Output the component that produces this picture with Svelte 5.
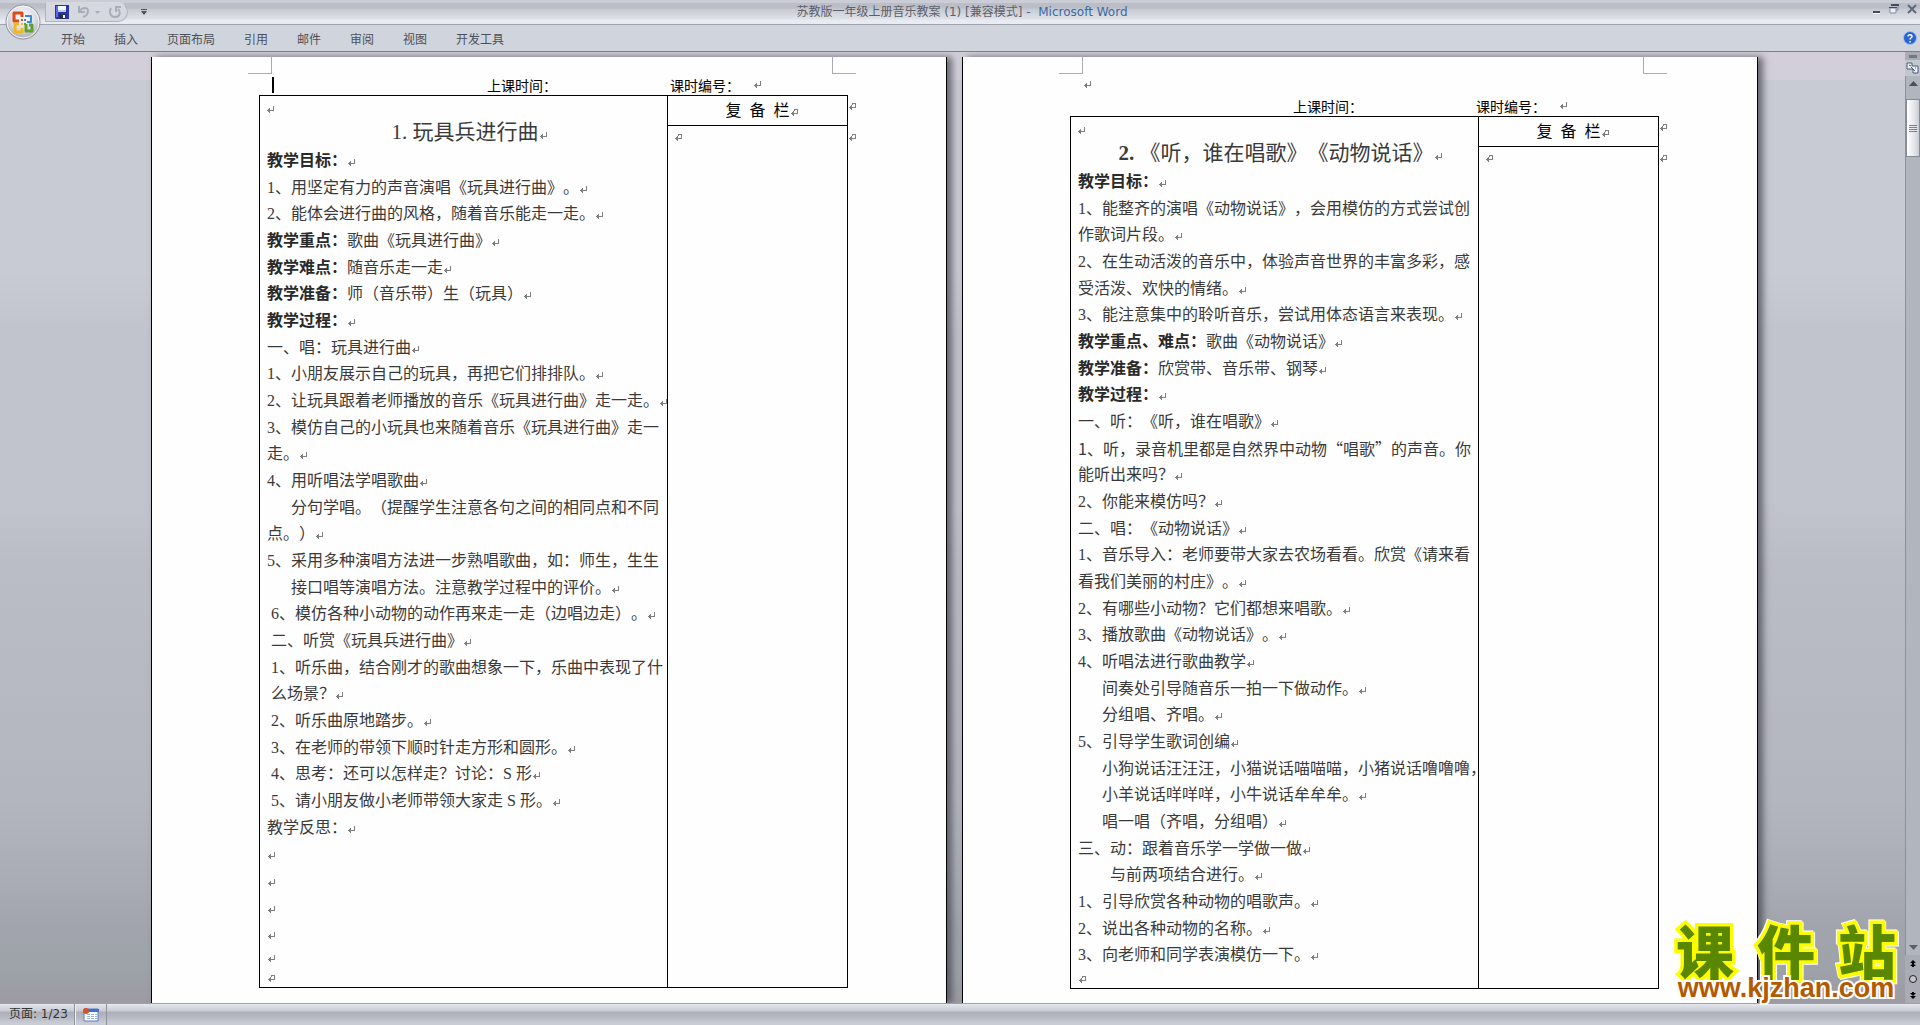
<svelte:options runes={true} />

<script lang="ts">
	type Line = { b?: string; t?: string; indent?: number; wide?: boolean; short?: boolean; open?: boolean; end?: boolean };
	type Page = { title: string; number: string; lines: Line[] };

	const tabs = ['开始', '插入', '页面布局', '引用', '邮件', '审阅', '视图', '开发工具'];

	// open: the line wraps into the next one, so it carries no paragraph mark
	const pages: Page[] = [
		{
			number: '1.',
			title: '玩具兵进行曲',
			lines: [
				{ b: '教学目标：' },
				{ t: '1、用坚定有力的声音演唱《玩具进行曲》。' },
				{ t: '2、能体会进行曲的风格，随着音乐能走一走。' },
				{ b: '教学重点：', t: '歌曲《玩具进行曲》' },
				{ b: '教学难点：', t: '随音乐走一走' },
				{ b: '教学准备：', t: '师（音乐带）生（玩具）' },
				{ b: '教学过程：' },
				{ t: '一、唱：玩具进行曲' },
				{ t: '1、小朋友展示自己的玩具，再把它们排排队。' },
				{ t: '2、让玩具跟着老师播放的音乐《玩具进行曲》走一走。' },
				{ t: '3、模仿自己的小玩具也来随着音乐《玩具进行曲》走一', open: true },
				{ t: '走。' },
				{ t: '4、用听唱法学唱歌曲' },
				{ t: '分句学唱。（提醒学生注意各句之间的相同点和不同', indent: 24, open: true },
				{ t: '点。）' },
				{ t: '5、采用多种演唱方法进一步熟唱歌曲，如：师生，生生', open: true },
				{ t: '接口唱等演唱方法。注意教学过程中的评价。', indent: 24 },
				{ t: '6、模仿各种小动物的动作再来走一走（边唱边走）。', indent: 4 },
				{ t: '二、听赏《玩具兵进行曲》', indent: 4 },
				{ t: '1、听乐曲，结合刚才的歌曲想象一下，乐曲中表现了什', indent: 4, open: true },
				{ t: '么场景？', indent: 4 },
				{ t: '2、听乐曲原地踏步。', indent: 4 },
				{ t: '3、在老师的带领下顺时针走方形和圆形。', indent: 4 },
				{ t: '4、思考：还可以怎样走？讨论：S 形', indent: 4 },
				{ t: '5、请小朋友做小老师带领大家走 S 形。', indent: 4 },
				{ t: '教学反思：' },
				{},
				{},
				{},
				{},
				{ short: true },
				{ short: true, end: true }
			]
		},
		{
			number: '2.',
			title: '《听，谁在唱歌》《动物说话》',
			lines: [
				{ b: '教学目标：' },
				{ t: '1、能整齐的演唱《动物说话》，会用模仿的方式尝试创', open: true },
				{ t: '作歌词片段。' },
				{ t: '2、在生动活泼的音乐中，体验声音世界的丰富多彩，感', open: true },
				{ t: '受活泼、欢快的情绪。' },
				{ t: '3、能注意集中的聆听音乐，尝试用体态语言来表现。' },
				{ b: '教学重点、难点：', t: '歌曲《动物说话》' },
				{ b: '教学准备：', t: '欣赏带、音乐带、钢琴' },
				{ b: '教学过程：' },
				{ t: '一、听：《听，谁在唱歌》' },
				{ t: '1、听，录音机里都是自然界中动物“唱歌”的声音。你', wide: true, open: true },
				{ t: '能听出来吗？' },
				{ t: '2、你能来模仿吗？' },
				{ t: '二、唱：《动物说话》' },
				{ t: '1、音乐导入：老师要带大家去农场看看。欣赏《请来看', open: true },
				{ t: '看我们美丽的村庄》。' },
				{ t: '2、有哪些小动物？它们都想来唱歌。' },
				{ t: '3、播放歌曲《动物说话》。' },
				{ t: '4、听唱法进行歌曲教学' },
				{ t: '间奏处引导随音乐一拍一下做动作。', indent: 24 },
				{ t: '分组唱、齐唱。', indent: 24 },
				{ t: '5、引导学生歌词创编' },
				{ t: '小狗说话汪汪汪，小猫说话喵喵喵，小猪说话噜噜噜，', indent: 24, open: true },
				{ t: '小羊说话咩咩咩，小牛说话牟牟牟。', indent: 24 },
				{ t: '唱一唱（齐唱，分组唱）', indent: 24 },
				{ t: '三、动：跟着音乐学一学做一做' },
				{ t: '与前两项结合进行。', indent: 32 },
				{ t: '1、引导欣赏各种动物的唱歌声。' },
				{ t: '2、说出各种动物的名称。' },
				{ t: '3、向老师和同学表演模仿一下。' },
				{ short: true, end: true }
			]
		}
	];
</script>

{#snippet mark()}
	<svg class="mark" viewBox="0 0 7 7" aria-hidden="true">
		<path d="M6 0h1v5H6zM0 4h6v1H0zM1 3h1v3H1zM2 2h1v5H2z" />
	</svg>
{/snippet}

{#snippet cellMark()}
	<svg class="mark" viewBox="0 0 7 7" aria-hidden="true">
		<path d="M3 0h4v1H3zM3 1h1v1H3zM6 1h1v4H6zM0 4h6v1H0zM1 3h1v3H1zM2 2h1v5H2z" />
	</svg>
{/snippet}

<div class="word" lang="zh-CN">
	<header class="titlebar">
		<div class="quick">
			<button aria-label="保存">
				<svg width="14" height="14" viewBox="0 0 14 14">
					<path d="M0 0h14v14H1L0 13z" fill="#2b35a8" />
					<path d="M1 1h2v11H1z" fill="#5b6be0" />
					<path d="M3 1h8v6H3z" fill="#f4f7ff" />
					<path d="M3 5h8v2H3z" fill="#b8cdf2" />
					<path d="M4 9h7v5H4z" fill="#27304f" />
					<path d="M8 10h2v3H8z" fill="#fff" />
				</svg>
			</button>
			<button aria-label="撤消">
				<svg width="22" height="14" viewBox="0 0 22 14" fill="none">
					<path d="M1 1v6h6M2 6c2-4 8-4 8 0 0 3-2 5-5 6" stroke="#a9adba" stroke-width="2" />
					<path d="M17 6h5l-2.5 3z" fill="#a9adba" />
				</svg>
			</button>
			<button aria-label="恢复">
				<svg width="12" height="14" viewBox="0 0 12 14" fill="none">
					<path d="M2 3C0 7 1 12 6 12s6-5 3-8" stroke="#a9adba" stroke-width="2" />
					<path d="M6 1h6v2H8v4H6z" fill="#a9adba" />
				</svg>
			</button>
		</div>
		<button class="more" aria-label="自定义快速访问工具栏">
			<svg width="6" height="6" viewBox="0 0 6 6"><path d="M0 0h6v1H0zM0 2h6L3 6z" fill="#4a4d55" /></svg>
		</button>
		<h1>苏教版一年级上册音乐教案 (1) [兼容模式] <span>- &nbsp;Microsoft Word</span></h1>
		<div class="window-buttons">
			<button aria-label="最小化">
				<svg width="9" height="10" viewBox="0 0 9 10"><path d="M1 7h7v2H1z" fill="#454a5c" /><path d="M1 9h7v1H1z" fill="#fff" /></svg>
			</button>
			<button aria-label="还原">
				<svg width="10" height="10" viewBox="0 0 10 10" fill="none">
					<path d="M2 1h7v5H7" stroke="#7f8ba6" />
					<path d="M2 0h8v2H2z" fill="#454a5c" />
					<path d="M1 4h6v5H1z" fill="#eef0f5" stroke="#7f8ba6" />
					<path d="M0 3h8v1H0z" fill="#454a5c" />
				</svg>
			</button>
			<button aria-label="关闭">
				<svg width="10" height="10" viewBox="0 0 10 10"><path d="M1 1l8 8M9 1L1 9" stroke="#5d6880" stroke-width="2" /></svg>
			</button>
		</div>
	</header>

	<button class="office" aria-label="Office 按钮">
		<svg width="36" height="36" viewBox="0 0 36 36">
			<defs>
				<radialGradient id="orb" cx="50%" cy="35%" r="65%">
					<stop offset="0" stop-color="#fff" />
					<stop offset="0.6" stop-color="#d9dbe1" />
					<stop offset="1" stop-color="#a6a9b1" />
				</radialGradient>
			</defs>
			<circle cx="18" cy="18" r="17" fill="url(#orb)" stroke="#8f929a" />
			<circle cx="18" cy="18" r="16" fill="none" stroke="#f7f8fa" />
			<g fill="none" stroke-width="3" stroke-linejoin="round">
				<path d="M14 17H9V9h8v4" stroke="#dc4a16" />
				<path d="M20 12h6v6h-4" stroke="#3a8bd6" stroke-width="2" />
				<path d="M14 20h-4v8h7v-4" stroke="#f5b81c" />
				<path d="M21 20v7h6v-6h-3" stroke="#5fa02e" />
			</g>
			<path d="M16 15h2v2h-2z" fill="#dc4a16" />
			<path d="M19 15h2v2h-2z" fill="#3a8bd6" />
			<path d="M16 19h2v2h-2z" fill="#f5b81c" />
			<path d="M19 19h2v2h-2z" fill="#5fa02e" />
		</svg>
	</button>

	<nav class="tabs">
		{#each tabs as tab}
			<button>{tab}</button>
		{/each}
		<button class="help" aria-label="帮助">
			<svg width="14" height="14" viewBox="0 0 14 14">
				<circle cx="7" cy="7" r="6.5" fill="#2a62d0" stroke="#9fc0ee" />
				<path d="M5 5.5c0-2.5 4-2.5 4 0 0 1.5-2 1.5-2 3M7 10v1.5" fill="none" stroke="#fff" stroke-width="1.5" />
			</svg>
		</button>
	</nav>

	<div class="workspace">
		<main>
			{#each pages as page, i}
				<article class="paper">
					<span class="corner left"></span>
					<span class="corner right"></span>
					{#if i > 0}
						<p class="headline">{@render mark()}</p>
					{/if}
					<p class="headline">
						<span class="lead" class:caret={i === 0}></span>
						<span class="when">上课时间：</span>
						<span>课时编号：</span>
						{@render mark()}
					</p>
					<div class="plan">
						<section class="content">
							<p class="blank">{@render mark()}</p>
							<h2>{#if i > 0}<b>{page.number}</b>{:else}{page.number}{/if} {page.title}{@render mark()}</h2>
							<div class="lines">
								{#each page.lines as line}
									<p class:wide={line.wide} class:short={line.short} style:padding-left="{line.indent ?? 0}px">
										{#if line.b}<b>{line.b}</b>{/if}{line.t ?? ''}{#if line.end}{@render cellMark()}{:else if !line.open}{@render mark()}{/if}
									</p>
								{/each}
							</div>
						</section>
						<h3>复&nbsp; 备&nbsp; 栏{@render cellMark()}</h3>
						<div class="row-end">{@render cellMark()}</div>
						<section class="notes">{@render cellMark()}</section>
						<div class="row-end">{@render cellMark()}</div>
					</div>
				</article>
			{/each}
		</main>

		<aside class="scroll">
			<span class="split"></span>
			<button class="ruler" aria-label="标尺">
				<svg width="13" height="12" viewBox="0 0 13 12">
					<path d="M1 1h5v3h6v7H7V7H1z" fill="#eef0f5" stroke="#4b5a78" />
					<path d="M3 3l2 1M5 5l4 4M9 6h1" stroke="#4b5a78" />
				</svg>
			</button>
			<div class="track">
				<button aria-label="向上"><svg width="9" height="5" viewBox="0 0 9 5"><path d="M0 5l4.5-5L9 5z" fill="#4d5058" /></svg></button>
				<span class="thumb"><i></i><i></i><i></i><i></i></span>
				<button aria-label="向下"><svg width="9" height="5" viewBox="0 0 9 5"><path d="M0 0l4.5 5L9 0z" fill="#5d6068" /></svg></button>
			</div>
			<div class="browse">
				<button aria-label="上一页"><svg width="6" height="7" viewBox="0 0 6 7"><path d="M3 0l3 3H0zM2 3h2v1H2zM3 3l3 3H0zM2 6h2v1H2z" /></svg></button>
				<button aria-label="选择浏览对象"><svg width="8" height="8" viewBox="0 0 8 8"><circle cx="4" cy="4" r="3.5" fill="#c5c7cc" stroke="#222" /></svg></button>
				<button aria-label="下一页"><svg width="6" height="7" viewBox="0 0 6 7"><path d="M0 1h6L3 4zM2 0h2v1H2zM0 4h6L3 7z" /></svg></button>
			</div>
		</aside>

		<div class="site">
			<div class="site-name"><span>课</span><span>件</span><span>站</span></div>
			<div class="site-url">www.kjzhan.com</div>
		</div>
	</div>

	<footer>
		<span class="count">页面: 1/23</span>
		<button aria-label="宏">
			<svg width="16" height="14" viewBox="0 0 16 14">
				<path d="M1 1h14v12H1z" fill="#fff" stroke="#5a7fc0" />
				<path d="M1 1h15v3H1z" fill="#3c6fdc" />
				<path d="M4 6h3v1H4zM8 6h3v1H8zM12 6h2v1h-2zM4 8h3v1H4zM8 8h3v1H8zM12 8h2v1h-2zM4 10h3v1H4zM8 10h3v1H8zM12 10h2v1h-2z" fill="#9db6e4" />
				<circle cx="3" cy="3" r="3" fill="#d9502a" />
			</svg>
		</button>
	</footer>
</div>

<style>
	:global(body) {
		margin: 0;
		overflow: hidden;
	}

	.word {
		position: relative;
		display: flex;
		flex-direction: column;
		height: 100vh;
		font-family: 'DejaVu Sans', 'Noto Sans CJK SC', sans-serif;
		font-size: 12px;
		background: #d0d4dc;
	}

	button {
		display: flex;
		align-items: center;
		justify-content: center;
		margin: 0;
		padding: 0;
		border: 0;
		background: none;
		color: inherit;
		font: inherit;
	}

	p,
	h1,
	h2,
	h3 {
		margin: 0;
		font-weight: 400;
	}

	.titlebar {
		display: grid;
		grid-template-columns: 83px 26px 1fr 150px;
		align-items: center;
		height: 24px;
		padding-left: 45px;
		border-bottom: 1px solid #a0a4ae;
		background: linear-gradient(#cacdd5 0 3px, #bbbec6 3px 8px, #c6c9d1 9px, #d3d6dd 14px, #dfe2e8 19px, #e8ebf2 20px);
	}

	.quick {
		display: flex;
		align-items: center;
		gap: 9px;
		height: 20px;
		padding-left: 9px;
		border: 1px solid #b0b3bc;
		border-top-color: #d8dae0;
		border-radius: 0 10px 10px 0;
		background: #d5d8df;
		box-sizing: border-box;
	}

	.more {
		justify-content: flex-start;
		height: 24px;
		padding-left: 13px;
	}

	h1 {
		font-size: 12px;
		line-height: 24px;
		text-align: center;
		color: #5c606a;
	}

	h1 span {
		color: #3a69a6;
	}

	.window-buttons {
		display: flex;
		align-items: flex-start;
		justify-content: flex-end;
		gap: 8px;
		height: 16px;
		padding-right: 3px;
	}

	.office {
		position: absolute;
		top: 4px;
		left: 5px;
	}

	.tabs {
		display: flex;
		align-items: center;
		gap: 29px;
		height: 26px;
		padding: 0 3px 0 61px;
		border-bottom: 1px solid #7b8089;
		color: #4c505a;
	}

	.help {
		margin-left: auto;
	}

	.workspace {
		position: relative;
		display: flex;
		flex: 1;
		min-height: 0;
		background: linear-gradient(
			#d2cfda 0 28px,
			#c8cbd3 28px 220px,
			#c1c4cd 280px 450px,
			#babdc6 510px,
			#b3b6bf 750px,
			#a9acb4 830px,
			#a1a4ac 877px,
			#9da2a8 920px,
			#9c9aa2
		);
	}

	main {
		display: flex;
		flex: 1;
		justify-content: center;
		gap: 15px;
		padding: 5px 0 0 4px;
		overflow: hidden;
	}

	.paper {
		position: relative;
		width: 794px;
		padding-top: 17px;
		border: solid #000;
		border-width: 0 1px;
		background: #fefefe;
		box-shadow: 5px 0 7px rgba(60, 60, 70, 0.7);
	}

	.corner {
		position: absolute;
		top: 0;
		width: 23px;
		height: 16px;
		border-bottom: 1px solid #a9acb6;
	}

	.corner.left {
		left: 96px;
		border-right: 1px solid #a9acb6;
	}

	.corner.right {
		right: 90px;
		border-left: 1px solid #a9acb6;
	}

	.mark {
		display: inline-block;
		width: 7px;
		height: 7px;
		margin-left: 1px;
		fill: #808080;
	}

	.headline {
		display: flex;
		align-items: center;
		height: 21px;
		padding-left: 120px;
		font-family: 'Noto Sans CJK SC', sans-serif;
		font-size: 14px;
		line-height: 18px;
		color: #000;
		text-spacing-trim: space-all;
	}

	.headline span + .mark {
		margin-left: 14px;
	}

	.lead {
		width: 210px;
		height: 16px;
	}

	.caret {
		width: 213px;
		border-left: 2px solid #000;
	}

	.when {
		margin-right: 113px;
	}

	.plan {
		display: grid;
		grid-template-columns: 408px 181px 10px;
		grid-template-rows: 31px 1fr;
		margin-left: 107px;
		font-family: 'Liberation Serif', 'Noto Sans CJK SC', serif;
		font-size: 16px;
		color: #3a3a3a;
		text-spacing-trim: space-all;
	}

	.content {
		grid-row: 1 / 3;
		padding-left: 7px;
		border: 1px solid #000;
		border-right: 0;
	}

	.blank {
		height: 23px;
		line-height: 23px;
	}

	.blank .mark {
		margin-left: 0;
	}

	h2 {
		height: 28px;
		padding-left: 4px;
		font-size: 21px;
		line-height: 26px;
		text-align: center;
	}

	h2 b {
		font-weight: 700;
	}

	.lines p {
		height: 27px;
		line-height: 27px;
		white-space: nowrap;
	}

	.lines p:nth-child(3n) {
		height: 26px;
		line-height: 26px;
	}

	.lines .short:nth-child(n) {
		height: 20px;
		line-height: 20px;
	}

	.lines b {
		color: #2a2a2a;
	}

	.wide {
		font-family: 'Noto Sans CJK SC', sans-serif;
	}

	h3 {
		padding-left: 8px;
		border: 1px solid #000;
		font-size: 16px;
		line-height: 30px;
		text-align: center;
		color: #000;
	}

	.notes {
		padding: 0 6px;
		border: 1px solid #000;
		border-top: 0;
		line-height: 20px;
	}

	.row-end {
		line-height: 20px;
	}

	.scroll {
		display: flex;
		flex-direction: column;
		align-items: center;
		width: 15px;
		background: #a9acb5;
	}

	.split {
		width: 8px;
		height: 3px;
		margin: 3px 0 2px;
		background: #74777f;
	}

	.ruler {
		width: 15px;
		height: 16px;
		background: #c3c7d0;
	}

	.track {
		display: flex;
		flex: 1;
		flex-direction: column;
		align-items: center;
		align-self: stretch;
		border-left: 1px solid #8c9099;
		background: #b1b5bd;
	}

	.track button {
		height: 15px;
	}

	.track button:last-child {
		margin-top: auto;
	}

	.thumb {
		display: flex;
		flex-direction: column;
		align-items: center;
		justify-content: center;
		gap: 1px;
		width: 12px;
		height: 56px;
		margin-top: 8px;
		border: 1px solid #868a94;
		background: linear-gradient(90deg, #fff, #e4e6ec 60%, #c9ccd4);
	}

	.thumb i {
		width: 8px;
		height: 1px;
		background: #7d818b;
	}

	.browse {
		display: flex;
		flex-direction: column;
		align-self: stretch;
	}

	.browse button {
		height: 16px;
	}

	.site {
		position: absolute;
		right: 20px;
		bottom: 3px;
		width: 228px;
	}

	.site-name {
		display: flex;
		justify-content: space-between;
		padding: 0 4px;
		font-family: 'Noto Sans CJK SC', sans-serif;
		font-size: 58px;
		font-weight: 900;
		line-height: 54px;
		color: #5a8700;
		-webkit-text-stroke: 7px #fdfd00;
		paint-order: stroke fill;
		filter: drop-shadow(1px 1px 0 #fff) drop-shadow(-1px -1px 0 #fff);
	}

	.site-url {
		position: relative;
		font-family: 'Liberation Sans', sans-serif;
		font-size: 27px;
		font-weight: 700;
		line-height: 24px;
		color: #b35900;
		text-align: center;
		-webkit-text-stroke: 4px #fff;
		paint-order: stroke fill;
	}

	footer {
		display: flex;
		height: 21px;
		border-top: 1px solid #9fa2aa;
		background: linear-gradient(#e4e7ec, #c8cbd3 7px, #acafb7 8px, #b8bbc3 14px, #c9ccd4 19px);
		color: #333;
	}

	.count {
		width: 65px;
		padding-left: 9px;
		line-height: 21px;
		border-right: 1px solid #8f929a;
	}

	footer button {
		width: 32px;
		border-left: 1px solid #eceef2;
		border-right: 1px solid #8f929a;
	}
</style>
